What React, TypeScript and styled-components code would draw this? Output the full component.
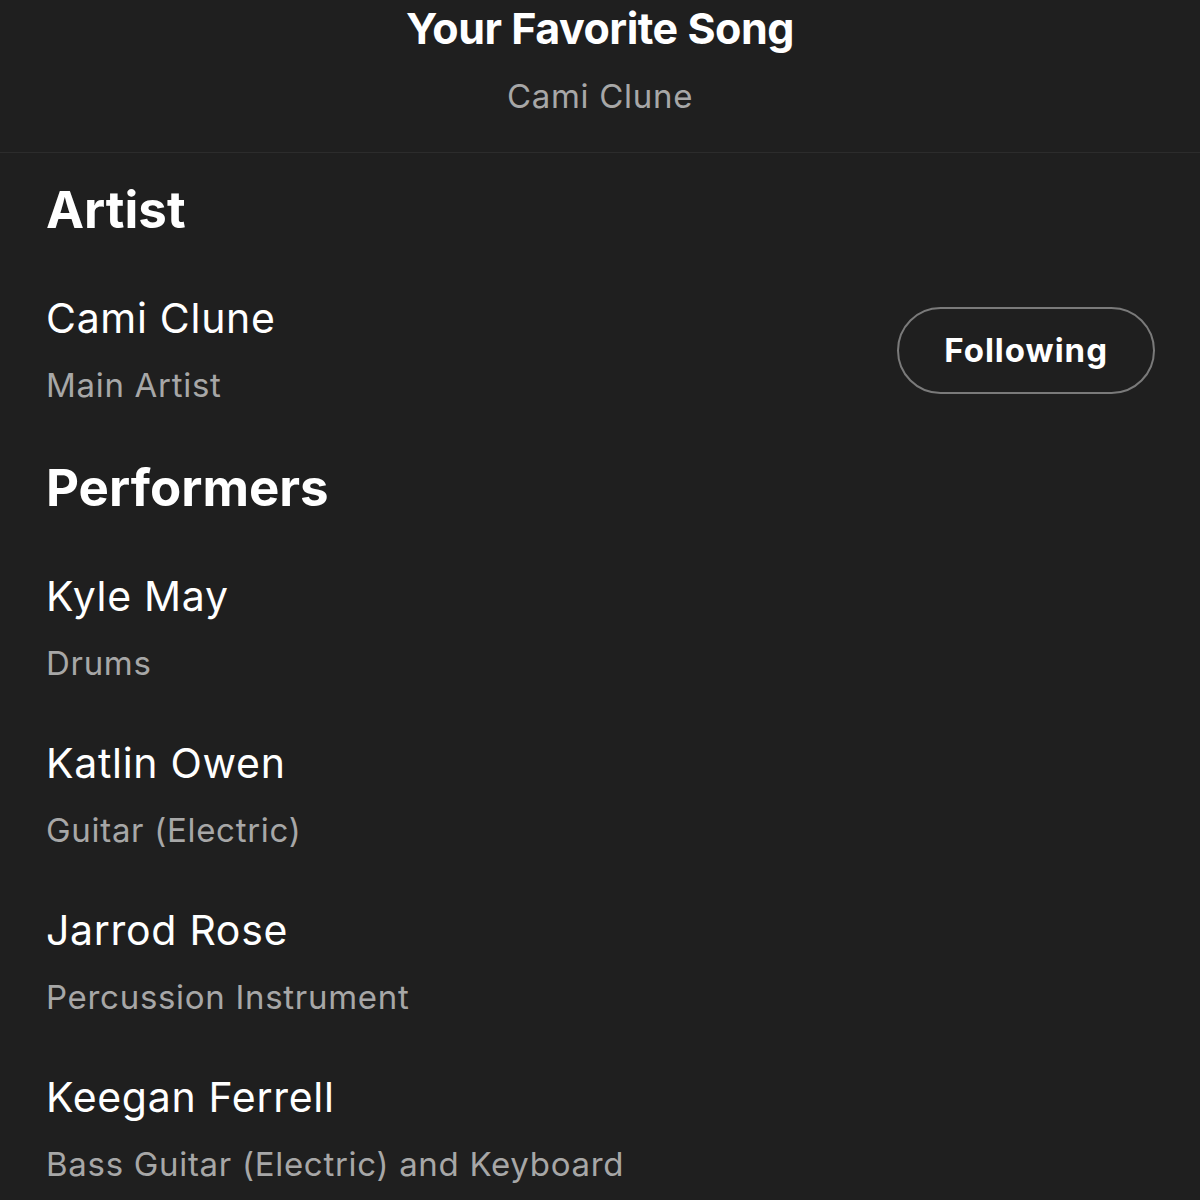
import styled, { createGlobalStyle } from "styled-components";

const GlobalStyle = createGlobalStyle`
  html, body {
    margin: 0;
    padding: 0;
    background: #1f1f1f;
  }
  body {
    font-family: Inter, "Noto Sans", sans-serif;
    font-variant-ligatures: none;
    color: #ffffff;
  }
`;

interface Credit {
  name: string;
  role: string;
}

const performers: Credit[] = [
  { name: "Kyle May", role: "Drums" },
  { name: "Katlin Owen", role: "Guitar (Electric)" },
  { name: "Jarrod Rose", role: "Percussion Instrument" },
  { name: "Keegan Ferrell", role: "Bass Guitar (Electric) and Keyboard" },
];

export default function App() {
  return (
    <>
      <GlobalStyle />
      <Page>
        <Header>
          <SongTitle>Your Favorite Song</SongTitle>
          <SongArtist>Cami Clune</SongArtist>
        </Header>
        <Content>
          <Section>
            <SectionTitle>Artist</SectionTitle>
            <Row>
              <CreditText>
                <Name>Cami Clune</Name>
                <Role>Main Artist</Role>
              </CreditText>
              <FollowButton>Following</FollowButton>
            </Row>
          </Section>
          <Section>
            <SectionTitle>Performers</SectionTitle>
            {performers.map((p) => (
              <Row key={p.name}>
                <CreditText>
                  <Name>{p.name}</Name>
                  <Role>{p.role}</Role>
                </CreditText>
              </Row>
            ))}
          </Section>
        </Content>
      </Page>
    </>
  );
}

const Page = styled.div`
  width: 1200px;
  min-height: 1200px;
  background: #1f1f1f;
  overflow: hidden;
`;

const Header = styled.header`
  display: flex;
  flex-direction: column;
  align-items: center;
  gap: 15px;
  padding-bottom: 31px;
  border-bottom: 1px solid #2c2c2c;
`;

const SongTitle = styled.h1`
  margin: 0;
  font-size: 43px;
  line-height: 56px;
  font-weight: 700;
  letter-spacing: -0.5px;
  color: #ffffff;
`;

const SongArtist = styled.div`
  font-size: 33px;
  line-height: 50px;
  letter-spacing: 0.7px;
  color: #a7a7a7;
`;

const Content = styled.main`
  display: flex;
  flex-direction: column;
  gap: 49px;
  padding: 26px 45px 0 46px;
`;

const Section = styled.section`
  display: flex;
  flex-direction: column;
  gap: 51px;
`;

const SectionTitle = styled.h2`
  margin: 0;
  font-size: 51px;
  line-height: 62px;
  font-weight: 700;
  color: #ffffff;
`;

const Row = styled.div`
  display: flex;
  align-items: center;
  justify-content: space-between;
`;

const CreditText = styled.div`
  display: flex;
  flex-direction: column;
  gap: 18px;
`;

const Name = styled.div`
  font-size: 41px;
  line-height: 52px;
  letter-spacing: 0.7px;
  color: #ffffff;
`;

const Role = styled.div`
  font-size: 33px;
  line-height: 46px;
  letter-spacing: 0.7px;
  color: #a7a7a7;
`;

const FollowButton = styled.button`
  height: 87px;
  padding: 0 45px;
  border: 2px solid #7a7a7a;
  border-radius: 44px;
  background: transparent;
  color: #ffffff;
  font-family: Inter, "Noto Sans", sans-serif;
  font-size: 33px;
  font-weight: 700;
  letter-spacing: 1px;
  cursor: pointer;
`;
